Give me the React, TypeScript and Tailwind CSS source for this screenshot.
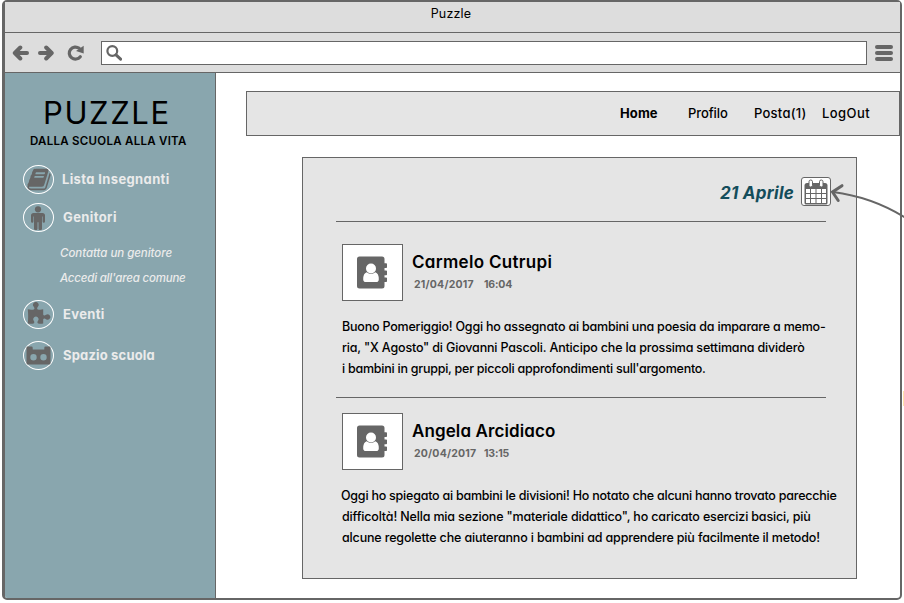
import React from 'react';

type IconProps = { className?: string };

const BookIcon = ({ className }: IconProps) => (
  <svg viewBox="0 0 1664 1792" fill="currentColor" className={className}>
    <path d="M1639 478q40 57 18 129l-275 906q-19 64-76.5 107.5t-122.5 43.5h-923q-77 0-148.5-53.5t-99.5-131.5q-24-67-2-127 0-4 3-27t4-37q1-8-3-21.5t-3-19.5q2-11 8-21t16.5-23.5 16.5-23.5q23-38 45-91.5t30-91.5q3-10 .5-30t-.5-28q3-11 17-28t17-23q21-36 42-92t25-90q1-9-2.5-32t.5-28q4-13 22-30.5t22-22.5q19-26 42.5-84.5t27.5-96.5q1-8-3-25.5t-2-26.5q2-8 9-18t18-23 17-21q8-12 16.5-30.5t15-35 16-36 19.5-32 26.5-23.5 36-11.5 47.5 5.5l-1 3q38-9 51-9h761q74 0 114 56t18 130l-274 906q-36 119-71.5 153.5t-128.5 34.5h-869q-27 0-38 15-11 16-1 43 24 70 144 70h923q29 0 56-15.5t35-41.5l300-987q7-22 5-57 38 15 59 43zm-1064 2q-4 13 2 22.5t20 9.5h608q13 0 25.5-9.5t16.5-22.5l21-64q4-13-2-22.5t-20-9.5h-608q-13 0-25.5 9.5t-16.5 22.5zm-83 256q-4 13 2 22.5t20 9.5h608q13 0 25.5-9.5t16.5-22.5l21-64q4-13-2-22.5t-20-9.5h-608q-13 0-25.5 9.5t-16.5 22.5z" />
  </svg>
);

const PersonIcon = ({ className }: IconProps) => (
  <svg viewBox="0 0 14 24" fill="currentColor" className={className}>
    <circle cx="7" cy="3.3" r="3.1" />
    <path d="M2.600 7h8.800Q14 7 14 9.600v6a1.200 1.200 0 0 1-2.400 0v-5h-.6v12a1.700 1.700 0 0 1-3.500 0v-6.400h-1v6.400a1.700 1.700 0 0 1-3.500 0v-12h-.6v5a1.200 1.200 0 0 1-2.400 0v-6Q0 7 2.600 7Z" />
  </svg>
);

const PuzzleIcon = ({ className }: IconProps) => (
  <svg viewBox="0 0 24 22" fill="currentColor" className={className}>
    <path d="M.8 7.300Q4 8 6.800 7.500C8 7 7.400 5.600 6.600 4.600A2.800 2.800 0 1 1 11 4.600C10.200 5.600 9.600 7 10.800 7.500Q13.500 8 16.200 7.300V12.600C16.600 14 18 13.600 19 12.800A2.700 2.700 0 1 1 19 17.200C18 16.400 16.600 16 16.200 17.400V21.500Q13.500 22 11.200 21.500C10 21 10.400 19.800 11 18.800A2.600 2.600 0 1 0 6.800 18.800C7.400 19.800 7.600 21 6.600 21.500Q4 22 .8 21.500Q1.500 14 .8 7.300Z" />
  </svg>
);

const BrickIcon = ({ className }: IconProps) => (
  <svg viewBox="0 0 25 19" fill="currentColor" fillRule="evenodd" className={className}>
    <path d="M1.500.5h4Q6.700.5 6.700 1.700V3.500H18.300V1.700Q18.300.5 19.500.5h4Q24.500.5 24.500 1.700V17Q24.500 18.500 23 18.500H2Q.5 18.500.5 17V1.700Q.5.5 1.500.5ZM7.500 8a3.200 3.200 0 1 0 0 6.400 3.200 3.200 0 0 0 0-6.400Zm10 0a3.200 3.200 0 1 0 0 6.400 3.200 3.200 0 0 0 0-6.400Z" />
  </svg>
);

const ContactIcon = ({ className }: IconProps) => (
  <svg viewBox="0 0 31 33" className={className}>
    <path fill="#666" d="M2.500.5h22.500q2.500 0 2.500 2.500v4.300h1.700q.8 0 .8.800v3.200q0 .8-.8.8h-1.700v2.300h1.700q.8 0 .8.800v3.200q0 .8-.8.8h-1.700v2.300h1.700q.8 0 .8.800v2.900q0 .8-.8.8h-1.700V30q0 2.500-2.500 2.500H2.500Q0 32.500 0 30V3Q0 .5 2.500.5Z" />
    <circle cx="14" cy="12.500" r="5" fill="#fff" />
    <path fill="#fff" d="M9.600 16.200q4.400 3.600 8.800 0 3.400 1.200 3.400 7 0 2.800-2.600 2.800H8.800q-2.600 0-2.600-2.800 0-5.800 3.400-7Z" />
  </svg>
);

const CalendarIcon = ({ className }: IconProps) => (
  <svg viewBox="0 0 24 26" className={className}>
    <path fill="#666" d="M3 4h18q2.500 0 2.500 2.500V24q0 1.500-1.500 1.500H2Q.5 25.500.5 24V6.500Q.5 4 3 4Z" />
    <path fill="#fff" d="M2 10h4v4H2zM7 10h4.500v4H7zM12.500 10H17v4h-4.500zM18 10h4v4h-4zM2 15h4v4H2zM7 15h4.500v4H7zM12.500 15H17v4h-4.500zM18 15h4v4h-4zM2 20h4v4H2zM7 20h4.500v4H7zM12.500 20H17v4h-4.500zM18 20h4v4h-4z" />
    <rect x="5" y="1" width="3.500" height="7" rx="1.700" fill="#fff" stroke="#666" />
    <rect x="15.500" y="1" width="3.500" height="7" rx="1.700" fill="#fff" stroke="#666" />
  </svg>
);

const MenuItem = ({ icon, label, className }: { icon: React.ReactNode; label: string; className: string }) => (
  <div className="flex h-[30px] items-start">
    <div className="flex h-[29px] w-[31px] shrink-0 items-center justify-center rounded-[50%] border border-white text-[#666]">
      {icon}
    </div>
    <span className={`text-[13px] leading-[28px] font-bold whitespace-nowrap text-[#ebebeb] ${className}`}>{label}</span>
  </div>
);

type PostProps = { name: string; nameClass: string; date: string; time: string; lines: { text: string; className: string }[] };

const Post = ({ name, nameClass, date, time, lines }: PostProps) => (
  <article className="pt-[22px] pl-[6px] whitespace-nowrap">
    <header className="flex">
      <div className="flex h-[57px] w-[61px] items-center justify-center border border-[#666] bg-white">
        <ContactIcon className="h-[33px] w-[31px]" />
      </div>
      <div className="pt-[7px]">
        <h2 className={`h-[23px] text-[17px] leading-[22px] font-semibold ${nameClass}`}>{name}</h2>
        <div className="flex h-[22px] pl-[11px] text-[10.5px] leading-[22px] font-bold text-[#666]">
          <span className="w-[70px] tracking-[0.2px]">{date}</span>
          <span className="tracking-[-0.2px]">{time}</span>
        </div>
      </div>
    </header>
    <div className="pt-[15px] text-[12.5px] leading-[21px] font-[450]">
      {lines.map((l) => (
        <p key={l.text} className={l.className}>{l.text}</p>
      ))}
    </div>
  </article>
);

export default function App() {
  return (
    <div className="relative h-[603px] w-[904px] overflow-hidden bg-white pl-[2px] font-['Inter','Liberation_Sans',sans-serif] text-black [font-feature-settings:'cv11'_1]">
      <div className="flex h-[600px] w-[900px] flex-col rounded-[5px] border-t-2 border-r-2 border-b-2 border-l-3 border-[#666] bg-white">
        <div className="h-[31px] shrink-0 border-b border-[#666] bg-[#ddd] pr-[3px] text-center text-[12.5px] leading-[23px] tracking-[0.2px]">
          Puzzle
        </div>
        <div className="flex h-[40px] shrink-0 items-center border-b border-[#666] bg-[#ddd] pl-[7px] text-[#666]">
          <svg viewBox="0 0 17 16" className="h-[16px] w-[17px]" fill="none" stroke="currentColor" strokeWidth="4" strokeLinecap="round" strokeLinejoin="round">
            <path d="M15 8H4M8.300 2.500 2.800 8l5.500 5.500" />
          </svg>
          <svg viewBox="0 0 17 16" className="ml-[8px] h-[16px] w-[17px]" fill="none" stroke="currentColor" strokeWidth="4" strokeLinecap="round" strokeLinejoin="round">
            <path d="M3 8H13M9.200 2.500 14.700 8l-5.500 5.500" />
          </svg>
          <svg viewBox="0 0 17 16" className="ml-[13px] h-[16px] w-[17px]">
            <path d="M13.300 11.800A6.200 6 0 1 1 12.200 3.300" fill="none" stroke="currentColor" strokeWidth="3.200" strokeLinecap="round" />
            <path d="M16.700.8V8.500L9 6Z" fill="currentColor" />
          </svg>
          <div className="ml-[17px] flex h-[24px] w-[766px] items-center border border-[#666] bg-white pl-[4px]">
            <svg viewBox="0 0 16 16" className="h-[16px] w-[16px]" fill="none" stroke="currentColor">
              <circle cx="6.300" cy="6" r="4.900" strokeWidth="2.200" />
              <path d="m10 9.800 4.600 4.400" strokeWidth="3" strokeLinecap="round" />
            </svg>
          </div>
          <div className="ml-[8px] flex flex-col gap-[2px]">
            <i className="h-[4px] w-[18px] rounded-[2px] bg-[#666]" />
            <i className="h-[4px] w-[18px] rounded-[2px] bg-[#666]" />
            <i className="h-[4px] w-[18px] rounded-[2px] bg-[#666]" />
          </div>
        </div>

        <div className="flex min-h-0 flex-1">
          <aside className="w-[211px] shrink-0 overflow-hidden rounded-bl-[2px] border-r border-[#666] bg-[#89a6ae] whitespace-nowrap">
            <h1 className="h-[42px] pt-[20px] pl-[38px] text-[31px] leading-[40px] tracking-[1.6px]">PUZZLE</h1>
            <p className="mt-[18px] pl-[25px] text-[11.5px] leading-[16px] font-semibold tracking-[0.27px]">DALLA SCUOLA ALLA VITA</p>
            <nav className="pt-[16px] pl-[18px]">
              <MenuItem icon={<BookIcon className="h-[25px] w-[24px]" />} label="Lista Insegnanti" className="ml-[8px] tracking-[0.37px]" />
              <div className="h-[8px]" />
              <MenuItem icon={<PersonIcon className="mr-px h-[24px] w-[14px]" />} label="Genitori" className="ml-[9px] tracking-[0.4px]" />
              <div className="pt-[8px] pb-[9px] pl-[37px] text-[11.5px] leading-[25px] font-medium text-[#ebebeb] italic">
                <p className="tracking-[-0.05px]">Contatta un genitore</p>
                <p className="tracking-[-0.2px]">Accedi all'area comune</p>
              </div>
              <MenuItem icon={<PuzzleIcon className="mb-[3px] h-[22px] w-[24px]" />} label="Eventi" className="ml-[9px] tracking-[0.35px]" />
              <div className="h-[11px]" />
              <MenuItem icon={<BrickIcon className="h-[19px] w-[25px]" />} label="Spazio scuola" className="ml-[9px] tracking-[0.17px]" />
            </nav>
          </aside>

          <main className="flex-1 pt-[18px] pl-[30px]">
            <nav className="flex h-[45px] w-[654px] border border-[#666] bg-[#e5e5e5] pl-[373px] text-[13px] leading-[43px] font-[450] whitespace-nowrap">
              <span className="w-[68px] font-bold tracking-[0.1px]">Home</span>
              <span className="w-[66px] tracking-[-0.1px]">Profilo</span>
              <span className="w-[68px] tracking-[0.25px]">Posta(1)</span>
              <span className="tracking-[0.45px]">LogOut</span>
            </nav>
            <section className="mt-[21px] ml-[56px] h-[422px] w-[555px] border border-[#666] bg-[#e5e5e5] pl-[33px]">
              <div className="flex h-[64px] w-[490px] border-b border-[#666] pl-[384px]">
                <span className="w-[81px] shrink-0 pt-[23px] text-[17px] leading-[24px] font-bold tracking-[0.25px] whitespace-nowrap text-[#144d5b] italic">21 Aprile</span>
                <div className="mt-[19px] flex h-[29px] w-[30px] shrink-0 items-center justify-center rounded-[3px] border border-[#666] bg-white">
                  <CalendarIcon className="h-[26px] w-[24px]" />
                </div>
              </div>
              <Post
                name="Carmelo Cutrupi"
                nameClass="pl-[9px] tracking-[0.3px]"
                date="21/04/2017"
                time="16:04"
                lines={[
                  { text: 'Buono Pomeriggio! Oggi ho assegnato ai bambini una poesia da imparare a memo-', className: 'tracking-[-0.2px]' },
                  { text: 'ria, "X Agosto" di Giovanni Pascoli. Anticipo che la prossima settimana dividerò', className: 'tracking-[-0.165px]' },
                  { text: "i bambini in gruppi, per piccoli approfondimenti sull'argomento.", className: 'tracking-[-0.24px]' },
                ]}
              />
              <div className="h-[19px] w-[490px] border-b border-[#666]" />
              <div className="-mt-[7px]">
                <Post
                  name="Angela Arcidiaco"
                  nameClass="pl-[9px] tracking-[0.1px]"
                  date="20/04/2017"
                  time="13:15"
                  lines={[
                    { text: 'Oggi ho spiegato ai bambini le divisioni! Ho notato che alcuni hanno trovato parecchie', className: '-ml-px tracking-[-0.23px]' },
                    { text: 'difficoltà! Nella mia sezione "materiale didattico", ho caricato esercizi basici, più', className: 'tracking-[-0.16px]' },
                    { text: 'alcune regolette che aiuteranno i bambini ad apprendere più facilmente il metodo!', className: 'tracking-[-0.155px]' },
                  ]}
                />
              </div>
            </section>
          </main>
        </div>
      </div>
      <svg viewBox="0 0 76 40" className="absolute top-[180px] left-[828px] h-[40px] w-[76px]" fill="none" stroke="#666" strokeLinecap="round">
        <path d="M5 12Q44 17 77 37.500" strokeWidth="2" />
        <path d="M14 5.700 4.500 12l5.700 8.500" strokeWidth="3" />
      </svg>
      <div className="absolute top-[391px] left-[903px] h-[15px] w-px bg-[#ffe2a8]" />
    </div>
  );
}
